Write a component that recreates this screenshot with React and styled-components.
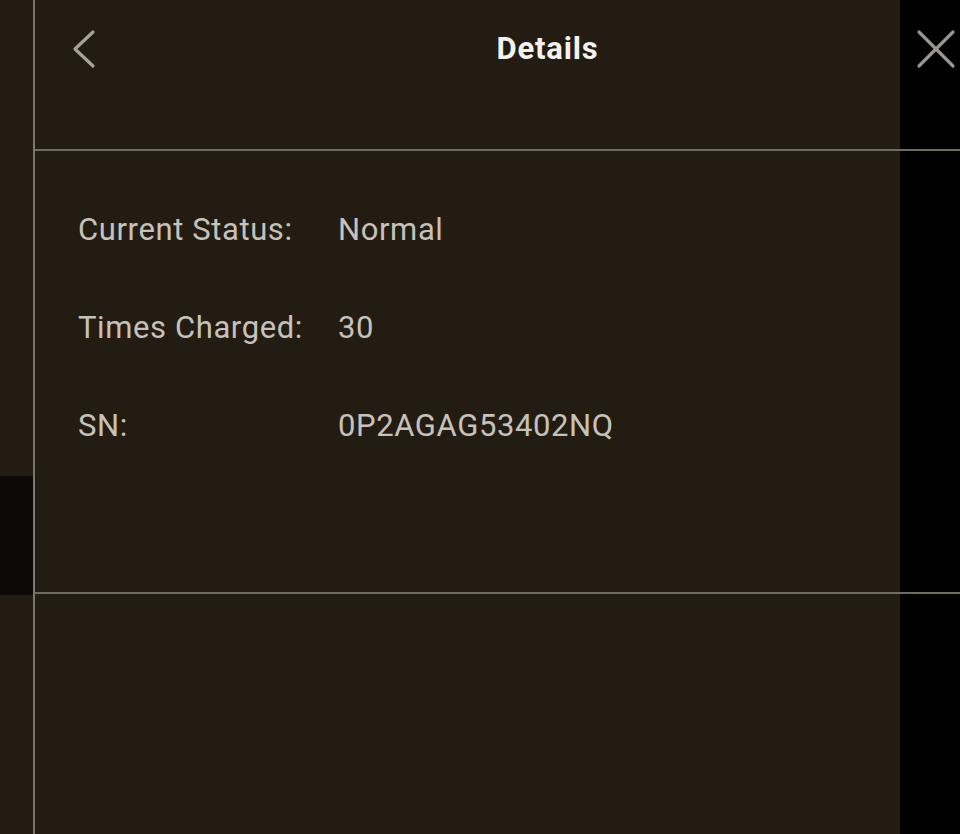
import React from "react";
import styled, { createGlobalStyle } from "styled-components";

const GlobalStyle = createGlobalStyle`
  html, body {
    margin: 0;
    padding: 0;
    background: #231c12;
  }
  body {
    font-family: Roboto, "Liberation Sans", sans-serif;
  }
`;

const rows = [
  { label: "Current Status:", value: "Normal" },
  { label: "Times Charged:", value: "30" },
  { label: "SN:", value: "0P2AGAG53402NQ" },
];

export default function App() {
  return (
    <>
      <GlobalStyle />
      <Page>
        <LeftRail>
          <RailBlock />
        </LeftRail>
        <Main>
          <Header>
            <HeaderPanel>
              <IconButton aria-label="Back">
                <svg width="26" height="40" viewBox="0 0 26 40" fill="none">
                  <path
                    d="M22 3 L4 20 L22 37"
                    stroke="#a7a29b"
                    strokeWidth="3.2"
                    strokeLinecap="round"
                    strokeLinejoin="round"
                  />
                </svg>
              </IconButton>
              <Title>Details</Title>
            </HeaderPanel>
            <HeaderSide>
              <IconButton aria-label="Close">
                <svg width="40" height="40" viewBox="0 0 40 40" fill="none">
                  <path
                    d="M3 3 L37 37 M37 3 L3 37"
                    stroke="#9a9690"
                    strokeWidth="3.2"
                    strokeLinecap="round"
                  />
                </svg>
              </IconButton>
            </HeaderSide>
          </Header>
          <Content>
            <InfoList>
              {rows.map((r) => (
                <InfoRow key={r.label}>
                  <Label>{r.label}</Label>
                  <Value>{r.value}</Value>
                </InfoRow>
              ))}
            </InfoList>
          </Content>
          <Footer />
        </Main>
      </Page>
    </>
  );
}

const Page = styled.div`
  display: flex;
  width: 960px;
  height: 834px;
  overflow: hidden;
`;

const LeftRail = styled.div`
  width: 33px;
  flex: none;
  background: #231c12;
  padding-top: 476px;
  box-sizing: border-box;
`;

const RailBlock = styled.div`
  height: 119px;
  background: #0c0a07;
`;

const Main = styled.div`
  flex: 1;
  display: flex;
  flex-direction: column;
  border-left: 2px solid #7c766e;
  background: linear-gradient(to right, #231c12 865px, #000 865px);
`;

const Header = styled.div`
  height: 149px;
  flex: none;
  display: flex;
  border-bottom: 2px solid #6f6a62;
`;

const HeaderPanel = styled.div`
  width: 865px;
  flex: none;
  display: flex;
  align-items: flex-start;
  padding: 29px 0 0 36px;
  box-sizing: border-box;
  position: relative;
`;

const HeaderSide = styled.div`
  flex: 1;
  display: flex;
  align-items: flex-start;
  padding: 29px 0 0 16px;
`;

const IconButton = styled.button`
  background: none;
  border: none;
  padding: 0;
  display: flex;
  cursor: pointer;
`;

const Title = styled.h1`
  margin: 0;
  position: absolute;
  left: 0;
  right: 0;
  top: 31px;
  padding-left: 160px;
  text-align: center;
  font-family: Roboto, "Liberation Sans", sans-serif;
  font-weight: 700;
  font-size: 31px;
  letter-spacing: 0.8px;
  line-height: 36px;
  color: #f4f2ee;
`;

const Content = styled.div`
  height: 443px;
  flex: none;
  border-bottom: 2px solid #6f6a62;
  padding: 61px 0 0 43px;
  box-sizing: border-box;
`;

const InfoList = styled.div`
  display: flex;
  flex-direction: column;
  gap: 62px;
`;

const InfoRow = styled.div`
  display: grid;
  grid-template-columns: 260px auto;
  font-size: 31px;
  letter-spacing: 0.6px;
  line-height: 36px;
  color: #c6c2bb;
`;

const Label = styled.span``;

const Value = styled.span``;

const Footer = styled.div`
  flex: 1;
`;
